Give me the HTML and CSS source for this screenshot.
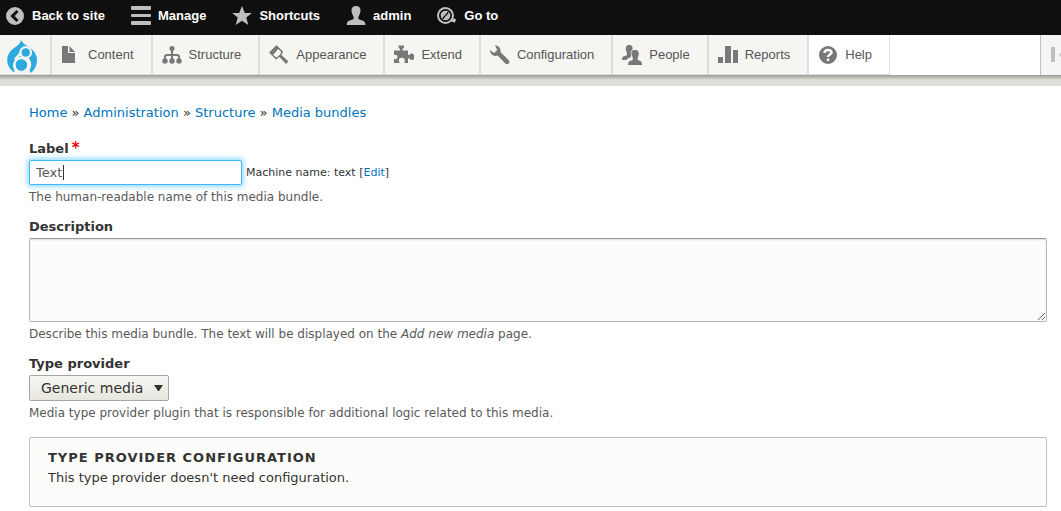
FILE: index.html
```html
<!DOCTYPE html>
<html lang="en">
<head>
<meta charset="utf-8">
<meta name="viewport" content="width=device-width, initial-scale=1">
<title>Add media bundle</title>
<link rel="stylesheet" href="styles.css">
</head>
<body>
<header class="toolbar">
  <nav class="bar" aria-label="Toolbar">
    <a class="bar-item" href="#"><svg class="icon" viewBox="0 0 20 20"><circle cx="10" cy="10" r="9"/><path class="dark-line" d="M12.500 5 7.500 10l5 5"/></svg>Back to site</a>
    <a class="bar-item" href="#"><svg class="icon" viewBox="0 0 20 20"><rect y="0" width="20" height="4" rx="1"/><rect y="8" width="20" height="3" rx="1"/><rect y="15" width="20" height="4" rx="1"/></svg>Manage</a>
    <a class="bar-item" href="#"><svg class="icon" viewBox="0 0 20 20"><path d="m10 0 2.800 7h7l-5.500 4.500 2 7.500L10 14.800 3.700 19l2-7.500L.2 7h7z"/></svg>Shortcuts</a>
    <a class="bar-item" href="#"><svg class="icon" viewBox="0 0 20 20"><path d="M10 0c3 0 4.600 2 4.500 4.800-.1 2.800-1.500 4.600-2.200 6.300-.3 2.500.8 2.600 3.300 3.200 2.500.7 3.800 1.800 3.900 4.700H.8c0-2.900 1.100-4 3.700-4.700 2.400-.6 3.500-.8 3.200-3.200-.8-1.800-2-3.500-2.200-6.300C5.300 2 7 0 10 0z"/></svg>admin</a>
    <a class="bar-item" href="#"><svg class="icon" viewBox="0 0 20 20"><circle class="light-line" cx="8.500" cy="9.500" r="7.500"/><circle cx="8.500" cy="9.500" r="4.800"/><path class="needle" d="M6 13c.5-3.500 4.500-3.500 5-7"/><path class="handle" d="m14.500 13.500 4 1.500"/></svg>Go to</a>
  </nav>
  <nav class="menu" aria-label="Administration menu">
    <a class="menu-item home" href="#" aria-label="Drupal"><svg class="logo" viewBox="0 0 32 34"><path class="blue" d="M15 1c1.500 3.500 5 5.200 8.500 7.500C28 11.500 31 15.500 31 21c0 5-1.800 9-5.500 12.500h-1C23.500 29 20 33.500 15.500 33.500S9 31 7.500 33C3.500 30 1.200 26 1.200 21c0-5.500 3.300-9.500 7.300-12.200C12 6.500 14.500 4.500 15 1z"/><circle class="cut" cx="19.700" cy="13.500" r="5.200"/><circle class="cut" cx="15.300" cy="26" r="7"/><path class="cut" d="M14.500 13.500c0 2.500-3.500 3.500-5.500 7M19.700 18.500c2.500.5 5 4.500 4 9-.5 2.500-1.500 5-4.500 7M8.500 26c0 3 .5 5.500 3 8"/><circle class="blue" cx="15.300" cy="26" r="5.500"/><circle class="blue" cx="19.700" cy="13.500" r="4"/></svg></a>
    <a class="menu-item" href="#"><svg class="icon" viewBox="0 0 20 20"><path d="M1 1h6v7h7v10H1zM8.500 1 14 7H8.500z"/></svg>Content</a>
    <a class="menu-item" href="#"><svg class="icon" viewBox="0 0 20 20"><circle cx="10" cy="3.500" r="2.500"/><path class="line" d="M10 4v13M3 16v-4q0-2 2-2h10q2 0 2 2v4"/><circle cx="3" cy="16" r="2.700"/><circle cx="10" cy="16" r="2.700"/><circle cx="17" cy="16" r="2.700"/></svg>Structure</a>
    <a class="menu-item" href="#"><svg class="icon" viewBox="0 0 20 20"><path fill-rule="evenodd" d="M0 7.500 7.500 0 14 6.500 12.500 10l7 6.500-2.500 2.500-6.500-7-3.500 2.500zM5.500 8.500 4 10l3.500 2.500L9.500 11l2-2 .5-2.500L9 4z"/></svg>Appearance</a>
    <a class="menu-item" href="#"><svg class="icon" viewBox="0 0 20 20"><path d="M0 5.500h6V4L4.500 2.500V.5h5.500v2L8.500 4v1.500H14V10l1.500-.2L17 8.500h1.500L20 10v4l-1.500 1H17l-1.500-1.500H14V18h-4c1-1.200 1.300-2.500.5-3.700-1-2-4.500-2-5.500 0-.5 1.200-.2 2.500.8 3.700H0v-4c2 .5 3.500-.5 3.500-2S2 9.500 0 10z"/></svg>Extend</a>
    <a class="menu-item" href="#"><svg class="icon" viewBox="0 0 20 20"><path d="M5 0.500c3-.2 5.500 2 5.500 5v1.600l8 8c2.500 2.500-.8 5.600-3.200 3.300l-7.600-8C4 12-.1 9.500 0 5l4 3 3.300-3z"/></svg>Configuration</a>
    <a class="menu-item" href="#"><svg class="icon" viewBox="0 0 20 20"><path d="M7 0c3 0 4 2 3.500 4.500C8.500 6 8.500 8 9 10c.2 1.500 0 2-1.500 2.800-1.500.7-2.500 1.200-3 2.200H0c0-3 1-3.500 3.500-4.200C5.500 10.200 5.300 9 4 5.500 3.200 2 4.500 0 7 0z"/><path d="M13 5c3 0 4.500 2 3.700 5-1.200 3.500-1.700 5 .5 5.500C19 16 20 17 20 20H6c0-3 1-4 3.500-4.500 2.200-.5 1.500-2 .2-5.500C8.800 7 10 5 13 5z"/></svg>People</a>
    <a class="menu-item" href="#"><svg class="icon" viewBox="0 0 20 20"><path d="M0 12h5v6H0zM7 1h6v17H7zM15 5h5v13h-5z"/></svg>Reports</a>
    <a class="menu-item help" href="#"><svg class="icon" viewBox="0 0 20 20"><circle cx="10" cy="10" r="9"/><path class="question" d="M6.500 8c0-4 7-4 7-.5C13.500 9.500 10 9.500 10 12M10 13.500V16"/></svg>Help</a>
    <button class="orient" type="button" aria-label="Vertical orientation"><svg class="icon" viewBox="0 0 20 20"><path d="M0 2h4v15H0zM8 10l7-7v4h5v6h-5v4z"/></svg></button>
  </nav>
</header>
<main class="page">
  <nav class="breadcrumb" aria-label="Breadcrumb"><a href="#">Home</a> » <a href="#">Administration</a> » <a href="#">Structure</a> » <a href="#">Media bundles</a></nav>
  <form>
    <div class="field">
      <label class="label" for="label">Label<span class="required">*</span></label>
      <div class="row">
        <div class="text-wrap"><input class="text" id="label" type="text" value="Text"><span class="caret"></span></div>
        <span class="machine">Machine name: text [<a href="#">Edit</a>]</span>
      </div>
      <p class="hint">The human-readable name of this media bundle.</p>
    </div>
    <div class="field">
      <label class="label" for="description">Description</label>
      <textarea class="area" id="description"></textarea>
      <p class="hint">Describe this media bundle. The text will be displayed on the <em>Add new media</em> page.</p>
    </div>
    <div class="field">
      <label class="label" for="provider">Type provider</label>
      <select class="select" id="provider"><option>Generic media</option></select>
      <p class="hint">Media type provider plugin that is responsible for additional logic related to this media.</p>
    </div>
    <section class="details">
      <h2 class="details-title">Type provider configuration</h2>
      <p class="details-text">This type provider doesn't need configuration.</p>
    </section>
  </form>
</main>
</body>
</html>
```
FILE: styles.css
```css
* { box-sizing: border-box; }
body { margin: 0; background: #fff; color: #333; font: 13px/20px "DejaVu Sans", sans-serif; }
a { color: #0074bd; text-decoration: none; }
p, h2 { margin: 0; }
.toolbar { border-bottom: 6px solid #e0e0d8; font: 13px/16px "Liberation Sans", sans-serif; }
.icon { width: 20px; height: 20px; flex: none; fill: currentColor; }
.bar { display: flex; gap: 26px; height: 35px; padding: 6px 5px; background: #0f0f0f; }
.bar-item { display: flex; align-items: flex-start; gap: 7px; color: #fff; font-weight: bold; line-height: 20px; }
.bar-item .icon { color: #bebebe; }
.dark-line { fill: none; stroke: #0f0f0f; stroke-width: 3; }
.light-line { fill: none; stroke: #bebebe; stroke-width: 2; }
.handle { stroke: #bebebe; stroke-width: 3.5; }
.needle { fill: none; stroke: #0f0f0f; stroke-width: 1.5; }
.menu { display: flex; height: 40px; overflow: hidden; background: #fff; }
.menu-item { display: flex; align-items: center; gap: 7px; padding: 0 17px 0 9px; border-right: 2px solid #ddd; border-bottom: 1px solid #ddd; background: #f5f5f2; color: #565656; }
.menu-item .icon { color: #787878; }
.home { padding: 3px 12px 0 6px; }
.logo { width: 32px; height: 34px; }
.blue { fill: #2ba9e0; }
.cut { fill: none; stroke: #f5f5f2; stroke-width: 2.5; }
.line { fill: none; stroke: currentColor; stroke-width: 2; }
.help { background: #fff; border-right-width: 1px; }
.question { fill: none; stroke: #fff; stroke-width: 2.5; }
.orient { display: flex; align-items: center; width: 21px; margin-left: auto; padding: 0 0 0 10px; border: 0; border-left: 1px solid #c0c0c0; background: #f5f5f5; color: #bebebe; overflow: hidden; }
.toolbar::after { content: ""; display: block; height: 5px; background: linear-gradient(#999, #e0e0d8); }
.page { padding: 17px 14px 4px 29px; }
.breadcrumb { margin-bottom: 16px; }
.field { display: flex; flex-direction: column; align-items: flex-start; margin-bottom: 10px; }
.label { font-weight: bold; line-height: 20px; margin-bottom: 1px; }
.required { margin-left: 3px; color: #e00; font-size: 15px; line-height: 16px; }
.row { display: flex; align-items: center; gap: 4px; }
.text-wrap { position: relative; width: 213px; }
.text { display: block; width: 100%; height: 25px; padding: 0 6px; border: 1px solid #40b6ff; border-radius: 2px; outline: 0; background: #fff; color: #595959; font: inherit; box-shadow: 0 0 5px 2px #9bdcff; }
.caret { position: absolute; left: 34px; top: 5px; width: 1px; height: 15px; background: #333; }
.machine { font-size: 11px; }
.hint { margin-top: 2px; color: #595959; font-size: 12px; line-height: 20px; }
.area { display: block; width: 100%; height: 84px; resize: vertical; border: 1px solid #b8b8b8; border-top-color: #999; border-radius: 2px; background: #fcfcfa; box-shadow: inset 0 1px 2px rgba(0, 0, 0, 0.13); font: inherit; }
.select { height: 26px; padding: 0 24px 0 11px; appearance: none; border: 1px solid #a6a6a6; border-radius: 2px; color: #333; font: 14px "DejaVu Sans", sans-serif; background: url("data:image/svg+xml,%3Csvg xmlns='http://www.w3.org/2000/svg' width='9' height='6'%3E%3Cpath fill='%23333' d='M0 0h9L5 6H4z'/%3E%3C/svg%3E") right 5px center no-repeat, linear-gradient(#f6f6f3, #e7e7df); }
.details { min-height: 70px; margin-top: 14px; padding: 10px 18px; border: 1px solid #bfbfbf; border-radius: 2px; background: #fcfcfa; }
.details-title { font-size: 13px; line-height: 20px; letter-spacing: 1px; text-transform: uppercase; }
.details-text { font-size: 13px; line-height: 20px; }
```
